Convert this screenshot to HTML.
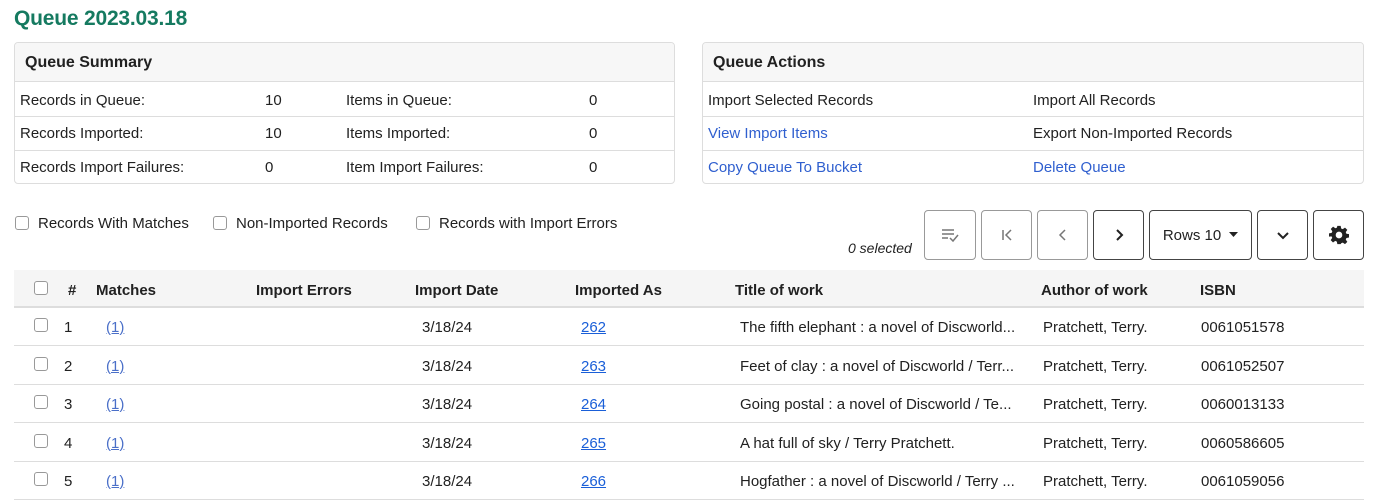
<!DOCTYPE html>
<html><head><meta charset="utf-8"><style>
*{box-sizing:border-box;margin:0;padding:0}
body{width:1381px;height:499px;overflow:hidden;background:#fff;font-family:"Liberation Sans",sans-serif;font-size:15px;color:#212121;position:relative}
.a{position:absolute;white-space:nowrap}
.card{position:absolute;border:1px solid #ddd;border-radius:4px;overflow:hidden}
.hd{position:absolute;left:0;right:0;top:0;height:39px;background:#f7f7f7;border-bottom:1px solid #ddd}
.ln{position:absolute;left:0;right:0;height:1px;background:#ddd}
.lk{color:#2f5fcf}
.cb{position:absolute;width:14px;height:14px;border:1px solid #999;border-radius:3px;background:#fff}
.btn{position:absolute;top:210px;height:50px;border:1px solid #999;border-radius:4px;background:#fff;display:flex;align-items:center;justify-content:center}
.btn.d{border-color:#444}
th,.th{font-weight:bold}
.u{text-decoration:underline}
</style></head><body>
<div class="a" style="left:14px;top:7px;font-size:21px;color:#157a60;font-weight:bold;letter-spacing:-0.2px">Queue 2023.03.18</div>

<div class="card" style="left:14px;top:42px;width:661px;height:142px">
<div class="hd"></div>
<div class="a th" style="left:10px;top:11px;font-size:16px">Queue Summary</div>
<div class="ln" style="top:73px"></div><div class="ln" style="top:107px"></div>
<div class="a" style="left:5px;top:49px">Records in Queue:</div><div class="a" style="left:250px;top:49px">10</div>
<div class="a" style="left:331px;top:49px">Items in Queue:</div><div class="a" style="left:574px;top:49px">0</div>
<div class="a" style="left:5px;top:82px">Records Imported:</div><div class="a" style="left:250px;top:82px">10</div>
<div class="a" style="left:331px;top:82px">Items Imported:</div><div class="a" style="left:574px;top:82px">0</div>
<div class="a" style="left:5px;top:116px">Records Import Failures:</div><div class="a" style="left:250px;top:116px">0</div>
<div class="a" style="left:331px;top:116px">Item Import Failures:</div><div class="a" style="left:574px;top:116px">0</div>
</div>

<div class="card" style="left:702px;top:42px;width:662px;height:142px">
<div class="hd"></div>
<div class="a th" style="left:10px;top:11px;font-size:16px">Queue Actions</div>
<div class="ln" style="top:73px"></div><div class="ln" style="top:107px"></div>
<div class="a" style="left:5px;top:49px">Import Selected Records</div><div class="a" style="left:330px;top:49px">Import All Records</div>
<div class="a lk" style="left:5px;top:82px">View Import Items</div><div class="a" style="left:330px;top:82px">Export Non-Imported Records</div>
<div class="a lk" style="left:5px;top:116px">Copy Queue To Bucket</div><div class="a lk" style="left:330px;top:116px">Delete Queue</div>
</div>

<div class="cb" style="left:15px;top:216px"></div><div class="a" style="left:38px;top:215px">Records With Matches</div>
<div class="cb" style="left:213px;top:216px"></div><div class="a" style="left:236px;top:215px">Non-Imported Records</div>
<div class="cb" style="left:416px;top:216px"></div><div class="a" style="left:439px;top:215px">Records with Import Errors</div>

<div class="a" style="left:848px;top:240px;font-style:italic;font-size:14px">0 selected</div>
<div class="btn" style="left:924px;width:52px"><svg width="20" height="16" viewBox="0 0 20 16" fill="none" stroke="#777" stroke-width="1.5"><path d="M2 3h12M2 7h12M2 11h6M10 11l3 3 5-6"/></svg></div>
<div class="btn" style="left:981px;width:51px"><svg width="16" height="16" viewBox="0 0 16 16" fill="none" stroke="#777" stroke-width="1.5"><path d="M4 3v10M12 3l-5 5 5 5"/></svg></div>
<div class="btn" style="left:1037px;width:51px"><svg width="16" height="16" viewBox="0 0 16 16" fill="none" stroke="#777" stroke-width="1.5"><path d="M10 3l-5 5 5 5"/></svg></div>
<div class="btn d" style="left:1093px;width:51px"><svg width="16" height="16" viewBox="0 0 16 16" fill="none" stroke="#222" stroke-width="2"><path d="M6 3l5 5-5 5"/></svg></div>
<div class="btn d" style="left:1149px;width:103px"><span>Rows 10</span><svg style="margin-left:8px" width="9" height="6" viewBox="0 0 9 6"><path d="M0 0h9L4.5 5z" fill="#222"/></svg></div>
<div class="btn d" style="left:1257px;width:51px"><svg width="16" height="16" viewBox="0 0 16 16" fill="none" stroke="#222" stroke-width="2"><path d="M3 6l5 5 5-5"/></svg></div>
<div class="btn d" style="left:1313px;width:51px"><svg width="20" height="20" viewBox="0 0 24 24"><path fill="#222" fill-rule="evenodd" d="M10 1h4l.6 3.2 1.9.8 2.7-1.9 2.8 2.8-1.9 2.7.8 1.9 3.1.5v4l-3.1.6-.8 1.9 1.9 2.7-2.8 2.8-2.7-1.9-1.9.8L14 23h-4l-.6-3.1-1.9-.8-2.7 1.9-2.8-2.8 1.9-2.7-.8-1.9L0 14v-4l3.2-.6.8-1.9-1.9-2.7 2.8-2.8 2.7 1.9 1.9-.8zM12 8a4 4 0 100 8 4 4 0 000-8z"/></svg></div>

<div class="a" style="left:14px;top:270px;width:1350px;height:38px;background:#f5f5f5;border-bottom:2px solid #ddd"></div>
<div class="cb" style="left:34px;top:281px"></div>
<div class="a th" style="left:68px;top:282px">#</div>
<div class="a th" style="left:96px;top:282px">Matches</div>
<div class="a th" style="left:256px;top:282px">Import Errors</div>
<div class="a th" style="left:415px;top:282px">Import Date</div>
<div class="a th" style="left:575px;top:282px">Imported As</div>
<div class="a th" style="left:735px;top:282px">Title of work</div>
<div class="a th" style="left:1041px;top:282px">Author of work</div>
<div class="a th" style="left:1200px;top:282px">ISBN</div>

<div id="rows"></div>
<script>
var d=[["The fifth elephant : a novel of Discworld...","262","0061051578"],["Feet of clay : a novel of Discworld / Terr...","263","0061052507"],["Going postal : a novel of Discworld / Te...","264","0060013133"],["A hat full of sky / Terry Pratchett.","265","0060586605"],["Hogfather : a novel of Discworld / Terry ...","266","0061059056"]];
var h="";
for(var i=0;i<5;i++){var y=308+i*38.5;var t=y+11;
h+='<div class="cb" style="left:34px;top:'+(y+10)+'px"></div>';
h+='<div class="a" style="left:64px;top:'+t+'px">'+(i+1)+'</div>';
h+='<div class="a u" style="left:106px;top:'+t+'px;color:#4a6fc8">(1)</div>';
h+='<div class="a" style="left:422px;top:'+t+'px">3/18/24</div>';
h+='<div class="a u" style="left:581px;top:'+t+'px;color:#1a5fd8">'+d[i][1]+'</div>';
h+='<div class="a" style="left:740px;top:'+t+'px">'+d[i][0]+'</div>';
h+='<div class="a" style="left:1043px;top:'+t+'px">Pratchett, Terry.</div>';
h+='<div class="a" style="left:1201px;top:'+t+'px">'+d[i][2]+'</div>';
h+='<div class="a" style="left:14px;top:'+(y+37)+'px;width:1350px;height:1px;background:#ddd"></div>';}
document.getElementById("rows").innerHTML=h;
</script>
</body></html>
